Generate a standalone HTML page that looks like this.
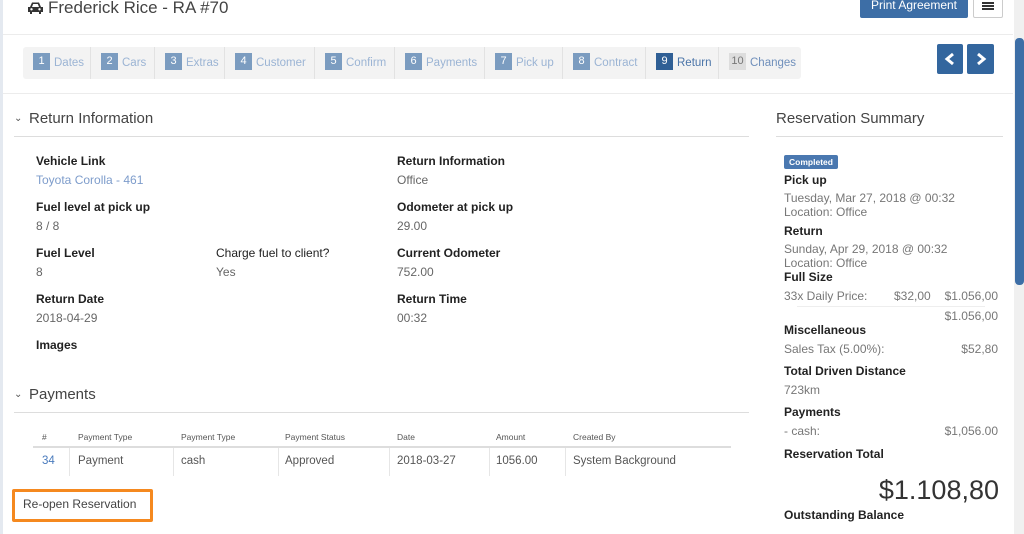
<!DOCTYPE html>
<html><head><meta charset="utf-8"><style>
*{margin:0;padding:0;box-sizing:border-box}
body{width:1024px;height:534px;overflow:hidden;background:#fff;font-family:"Liberation Sans",sans-serif;position:relative;color:#333}
.a{position:absolute;white-space:nowrap}
.l{font-size:12px;font-weight:bold;color:#222}
.v{font-size:12px;color:#666}
.st{font-size:11.5px;color:#9bb4d4}
.n{display:inline-block;width:17px;height:17px;background:#7b9cc0;color:#fff;font-size:11px;text-align:center;line-height:17px;margin-right:4px;vertical-align:middle}
.seg{position:absolute;top:47px;height:32px;line-height:30px;border-right:1px solid #e2e2e2;padding-left:10px}
.th{font-size:8.5px;color:#555}
.td{font-size:11.5px;color:#555}
.sl{font-size:12px;font-weight:bold;color:#222}
.sv{font-size:12px;color:#777}
</style></head><body>
<div class="a" style="left:0;top:0;width:3px;height:534px;background:#e4e9f0"></div>
<div class="a" style="left:3px;top:34px;width:1010px;height:1px;background:#ececec"></div>
<svg class="a" style="left:27px;top:1px" width="17" height="14" viewBox="0 0 17 14"><path d="M3 6 L5 1.5 H12 L14 6 H16 V11 H14 V13 H12 V11 H5 V13 H3 V11 H1 V6Z" fill="#333"/><circle cx="4.5" cy="8.3" r="1.2" fill="#fff"/><circle cx="12.5" cy="8.3" r="1.2" fill="#fff"/><path d="M5 6 L6.2 3 H10.8 L12 6Z" fill="#fff"/></svg>
<div class="a" style="left:48px;top:-2px;font-size:17px;color:#444">Frederick Rice - RA #70</div>
<div class="a" style="left:860px;top:-4px;width:108px;height:22px;background:#3d6ea6;border-radius:2px;color:#fff;font-size:12px;text-align:center;line-height:18px">Print Agreement</div>
<div class="a" style="left:973px;top:-4px;width:30px;height:22px;border:1px solid #ccc;border-radius:2px;background:#fff"></div>
<div class="a" style="left:982px;top:2px;width:12px;height:2px;background:#333;box-shadow:0 3px 0 #333,0 6px 0 #333"></div>
<div class="a" style="left:23px;top:47px;width:778px;height:32px;background:#f3f3f3;border-radius:3px"></div>
<div class="seg" style="left:23px;width:68px"><span class="n">1</span><span class="st">Dates</span></div>
<div class="seg" style="left:91px;width:64px"><span class="n">2</span><span class="st">Cars</span></div>
<div class="seg" style="left:155px;width:70px"><span class="n">3</span><span class="st">Extras</span></div>
<div class="seg" style="left:225px;width:90px"><span class="n">4</span><span class="st">Customer</span></div>
<div class="seg" style="left:315px;width:80px"><span class="n">5</span><span class="st">Confirm</span></div>
<div class="seg" style="left:395px;width:90px"><span class="n">6</span><span class="st">Payments</span></div>
<div class="seg" style="left:485px;width:78px"><span class="n">7</span><span class="st">Pick up</span></div>
<div class="seg" style="left:563px;width:83px"><span class="n">8</span><span class="st">Contract</span></div>
<div class="seg" style="left:646px;width:73px"><span class="n" style="background:#2f5f95">9</span><span class="st" style="color:#4a74a8">Return</span></div>
<div class="seg" style="left:719px;width:82px;border:none"><span class="n" style="background:#ddd;color:#777">10</span><span class="st" style="color:#6f8fbb">Changes</span></div>
<div class="a" style="left:937px;top:44px;width:26px;height:30px;background:#33669e;border-radius:2px"></div>
<div class="a" style="left:967px;top:44px;width:27px;height:30px;background:#33669e;border-radius:2px"></div>
<svg class="a" style="left:937px;top:44px" width="57" height="30"><path d="M16 10 L10 15 L16 20" stroke="#fff" stroke-width="3" fill="none"/><path d="M41 10 L47 15 L41 20" stroke="#fff" stroke-width="3" fill="none"/></svg>
<div class="a" style="left:3px;top:93px;width:1010px;height:1px;background:#ececec"></div>
<div class="a" style="left:1014px;top:0;width:10px;height:534px;background:#f0f0f0"></div>
<div class="a" style="left:1015px;top:38px;width:9px;height:247px;background:#3d6ea6;border-radius:4px"></div>

<div class="a" style="left:14px;top:113px;font-size:10px;color:#555">&#8964;</div>
<div class="a" style="left:29px;top:110px;font-size:15px;color:#444">Return Information</div>
<div class="a" style="left:14px;top:136px;width:735px;height:1px;background:#ddd"></div>
<div class="a l" style="left:36px;top:154px">Vehicle Link</div><div class="a v" style="left:36px;top:173px;color:#7d9ccb">Toyota Corolla - 461</div>
<div class="a l" style="left:397px;top:154px">Return Information</div><div class="a v" style="left:397px;top:173px">Office</div>
<div class="a l" style="left:36px;top:200px">Fuel level at pick up</div><div class="a v" style="left:36px;top:219px">8 / 8</div>
<div class="a l" style="left:397px;top:200px">Odometer at pick up</div><div class="a v" style="left:397px;top:219px">29.00</div>
<div class="a l" style="left:36px;top:246px">Fuel Level</div><div class="a v" style="left:36px;top:265px">8</div>
<div class="a l" style="left:216px;top:246px;font-weight:normal">Charge fuel to client?</div><div class="a v" style="left:216px;top:265px">Yes</div>
<div class="a l" style="left:397px;top:246px">Current Odometer</div><div class="a v" style="left:397px;top:265px">752.00</div>
<div class="a l" style="left:36px;top:292px">Return Date</div><div class="a v" style="left:36px;top:311px">2018-04-29</div>
<div class="a l" style="left:397px;top:292px">Return Time</div><div class="a v" style="left:397px;top:311px">00:32</div>
<div class="a l" style="left:36px;top:338px">Images</div>

<div class="a" style="left:14px;top:389px;font-size:10px;color:#555">&#8964;</div>
<div class="a" style="left:29px;top:386px;font-size:15px;color:#444">Payments</div>
<div class="a" style="left:14px;top:412px;width:735px;height:1px;background:#ddd"></div>
<div class="a th" style="left:42px;top:432px">#</div>
<div class="a th" style="left:78px;top:432px">Payment Type</div>
<div class="a th" style="left:181px;top:432px">Payment Type</div>
<div class="a th" style="left:285px;top:432px">Payment Status</div>
<div class="a th" style="left:397px;top:432px">Date</div>
<div class="a th" style="left:496px;top:432px">Amount</div>
<div class="a th" style="left:573px;top:432px">Created By</div>
<div class="a" style="left:33px;top:446px;width:698px;height:2px;background:#ddd"></div>
<div class="a" style="left:69px;top:448px;width:1px;height:28px;background:#e6e6e6"></div>
<div class="a" style="left:173px;top:448px;width:1px;height:28px;background:#e6e6e6"></div>
<div class="a" style="left:278px;top:448px;width:1px;height:28px;background:#e6e6e6"></div>
<div class="a" style="left:389px;top:448px;width:1px;height:28px;background:#e6e6e6"></div>
<div class="a" style="left:489px;top:448px;width:1px;height:28px;background:#e6e6e6"></div>
<div class="a" style="left:565px;top:448px;width:1px;height:28px;background:#e6e6e6"></div>
<div class="a td" style="left:42px;top:455px;color:#4a7bbd">34</div>
<div class="a td" style="left:78px;top:455px">Payment</div>
<div class="a td" style="left:181px;top:455px">cash</div>
<div class="a td" style="left:285px;top:455px">Approved</div>
<div class="a td" style="left:397px;top:455px">2018-03-27</div>
<div class="a td" style="left:496px;top:455px">1056.00</div>
<div class="a td" style="left:573px;top:455px">System Background</div>
<div class="a" style="left:12px;top:489px;width:141px;height:33px;border:3px solid #f5891f;border-radius:2px"></div>
<div class="a" style="left:23px;top:497px;font-size:12px;color:#444">Re-open Reservation</div>

<div class="a" style="left:776px;top:110px;font-size:15px;color:#444">Reservation Summary</div>
<div class="a" style="left:776px;top:136px;width:227px;height:1px;background:#ddd"></div>
<div class="a" style="left:784px;top:155px;width:54px;height:14px;background:#4a78b0;border-radius:2px;color:#fff;font-size:8.5px;font-weight:bold;text-align:center;line-height:14px">Completed</div>
<div class="a sl" style="left:784px;top:173px">Pick up</div>
<div class="a sv" style="left:784px;top:191px">Tuesday, Mar 27, 2018 @ 00:32</div>
<div class="a sv" style="left:784px;top:205px">Location: Office</div>
<div class="a sl" style="left:784px;top:224px">Return</div>
<div class="a sv" style="left:784px;top:242px">Sunday, Apr 29, 2018 @ 00:32</div>
<div class="a sv" style="left:784px;top:256px">Location: Office</div>
<div class="a sl" style="left:784px;top:270px">Full Size</div>
<div class="a sv" style="left:784px;top:289px">33x Daily Price:</div>
<div class="a sv" style="left:894px;top:289px">$32,00</div>
<div class="a sv" style="right:26px;top:289px">$1.056,00</div>
<div class="a" style="left:797px;top:306px;width:188px;height:1px;background:#eee"></div>
<div class="a sv" style="right:26px;top:309px">$1.056,00</div>
<div class="a sl" style="left:784px;top:323px">Miscellaneous</div>
<div class="a sv" style="left:784px;top:342px">Sales Tax (5.00%):</div>
<div class="a sv" style="right:26px;top:342px">$52,80</div>
<div class="a sl" style="left:784px;top:364px">Total Driven Distance</div>
<div class="a sv" style="left:784px;top:383px">723km</div>
<div class="a sl" style="left:784px;top:405px">Payments</div>
<div class="a sv" style="left:784px;top:424px">- cash:</div>
<div class="a sv" style="right:26px;top:424px">$1,056.00</div>
<div class="a sl" style="left:784px;top:447px">Reservation Total</div>
<div class="a" style="right:25px;top:475px;font-size:27px;color:#333">$1.108,80</div>
<div class="a sl" style="left:784px;top:508px">Outstanding Balance</div>
</body></html>
